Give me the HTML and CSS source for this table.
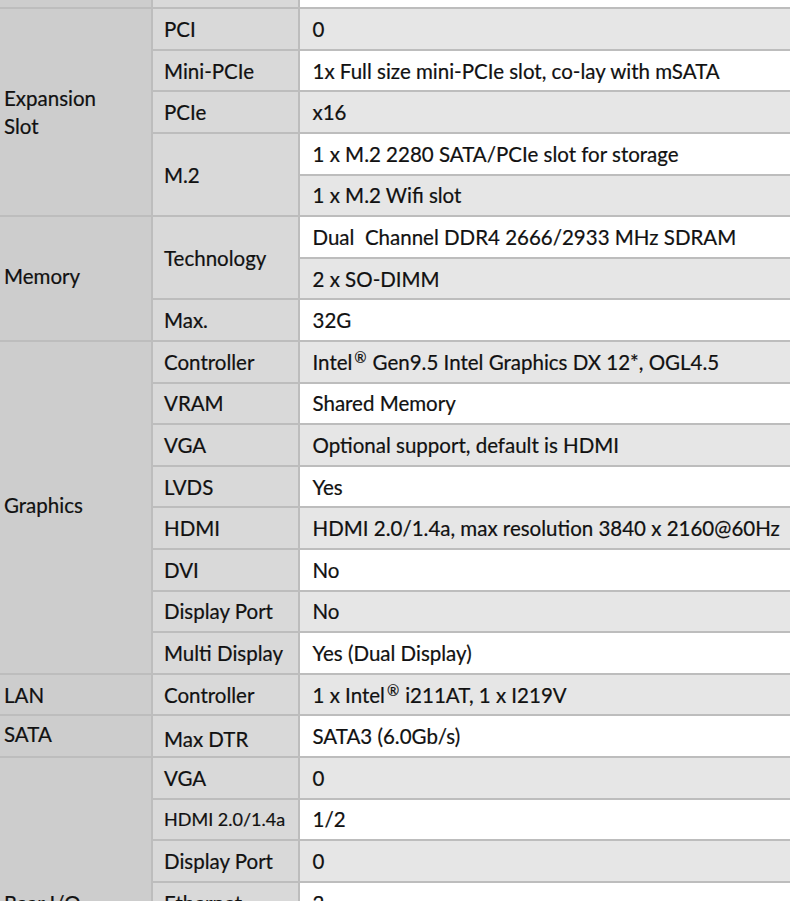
FILE: index.html
```html
<!DOCTYPE html>
<html lang="en">
<head>
<meta charset="utf-8">
<title>Specifications</title>
<link rel="stylesheet" href="styles.css">
</head>
<body>
<div class="spec">
  <div class="c1 g"></div><div class="c2"></div><div class="c3 w"></div>

  <div class="c1 s5"><span>Expansion<br>Slot</span></div>
  <div class="c2">PCI</div><div class="c3 g">0</div>
  <div class="c2">Mini-PCIe</div><div class="c3 w">1x Full size mini-PCIe slot, co-lay with mSATA</div>
  <div class="c2">PCIe</div><div class="c3 g">x16</div>
  <div class="c2 s2">M.2</div><div class="c3 w">1 x M.2 2280 SATA/PCIe slot for storage</div><div class="c3 g">1 x M.2 Wifi slot</div>

  <div class="c1 s3 lift">Memory</div>
  <div class="c2 s2">Technology</div><div class="c3 w">Dual&nbsp; Channel DDR4 2666/2933 MHz SDRAM</div><div class="c3 g">2 x SO-DIMM</div>
  <div class="c2">Max.</div><div class="c3 w">32G</div>

  <div class="c1 s8 lift">Graphics</div>
  <div class="c2">Controller</div><div class="c3 g"><span>Intel<sup>®</sup>Gen9.5 Intel Graphics DX 12*, OGL4.5</span></div>
  <div class="c2">VRAM</div><div class="c3 w">Shared Memory</div>
  <div class="c2">VGA</div><div class="c3 g">Optional support, default is HDMI</div>
  <div class="c2">LVDS</div><div class="c3 w">Yes</div>
  <div class="c2">HDMI</div><div class="c3 g">HDMI 2.0/1.4a, max resolution 3840 x 2160@60Hz</div>
  <div class="c2">DVI</div><div class="c3 w">No</div>
  <div class="c2">Display Port</div><div class="c3 g">No</div>
  <div class="c2">Multi Display</div><div class="c3 w">Yes (Dual Display)</div>

  <div class="c1">LAN</div>
  <div class="c2">Controller</div><div class="c3 g"><span>1 x Intel<sup>®</sup>i211AT, 1 x I219V</span></div>

  <div class="c1 up">SATA</div>
  <div class="c2 down">Max DTR</div><div class="c3 w">SATA3 (6.0Gb/s)</div>

  <div class="c1 s7">Rear I/O</div>
  <div class="c2">VGA</div><div class="c3 g">0</div>
  <div class="c2 small">HDMI 2.0/1.4a</div><div class="c3 w">1/2</div>
  <div class="c2">Display Port</div><div class="c3 g">0</div>
  <div class="c2">Ethernet</div><div class="c3 w">2</div>
  <div class="c2">USB 3.1</div><div class="c3 g">4</div>
  <div class="c2">Audio</div><div class="c3 w">1</div>
  <div class="c2">DC-in</div><div class="c3 g">1</div>
</div>
</body>
</html>
```
FILE: styles.css
```css
html, body {
  margin: 0;
  padding: 0;
  background: #ffffff;
}
body {
  font-family: Lato, "Open Sans", sans-serif;
  font-size: 20.5px;
  color: #111111;
  -webkit-text-stroke: 0.2px #111111;
  overflow: hidden;
}
.spec {
  display: grid;
  grid-template-columns: 151px 144.5px 1fr;
  grid-auto-rows: 39.6px;
  gap: 2px;
  background: #bdbdbd;
  margin-top: -32.3px;
}
.spec > div {
  display: flex;
  align-items: center;
  white-space: nowrap;
  line-height: 28px;
}
.c1 {
  grid-column: 1;
  background: #cdcdcd;
  padding-left: 4px;
}
.c2 {
  grid-column: 2;
  background: #d9d9d9;
  padding-left: 11px;
}
.c3 {
  grid-column: 3;
  padding-left: 13px;
}
.c3.g { background: #e6e6e6; }
.c3.w { background: #ffffff; }
.c1.g { background: #cdcdcd; }
.s2 { grid-row: span 2; }
.s3 { grid-row: span 3; }
.s5 { grid-row: span 5; }
.s7 { grid-row: span 7; }
.s8 { grid-row: span 8; }
.lift { padding-bottom: 5px; }
.up { padding-bottom: 4px; }
.down { padding-top: 6px; }
.small { font-size: 18px; }
sup {
  font-size: 0.72em;
  line-height: 0;
  vertical-align: 0.45em;
  margin-left: 2px;
  margin-right: 6px;
}
```
